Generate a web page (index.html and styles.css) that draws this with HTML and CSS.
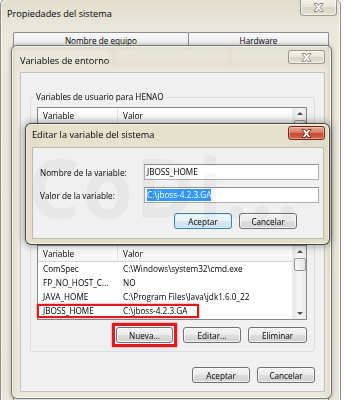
FILE: index.html
```html
<!DOCTYPE html>
<html lang="es">
<head>
    <meta charset="UTF-8">
    <meta name="viewport" content="width=device-width, initial-scale=1.0">
    <title>Variables de entorno</title>
    <link rel="stylesheet" href="styles.css">
</head>
<body>
<div class="escritorio">

    <div class="ventana ventana-sistema">
        <div class="barra">
            <span class="titulo">Propiedades del sistema</span>
            <span class="cerrar">
                <svg width="11" height="9" viewBox="0 0 11 9"><path d="M1 .5h3L5.5 2.6 7 .5h3L7.2 4.5 10 8.5H7L5.5 6.4 4 8.5H1l2.8-4z" fill="#fff" stroke="#777" stroke-width=".8"/></svg>
            </span>
        </div>
        <div class="pestanas">
            <div class="pestana p-equipo">Nombre de equipo</div>
            <div class="pestana p-hardware">Hardware</div>
        </div>
        <div class="pestanas">
            <div class="pestana p-avanzadas"></div>
            <div class="pestana p-proteccion"></div>
            <div class="pestana p-remoto"></div>
        </div>
        <div class="panel-pestana"></div>
    </div>

    <div class="ventana ventana-entorno">
        <div class="barra">
            <span class="titulo">Variables de entorno</span>
            <span class="cerrar">
                <svg width="11" height="9" viewBox="0 0 11 9"><path d="M1 .5h3L5.5 2.6 7 .5h3L7.2 4.5 10 8.5H7L5.5 6.4 4 8.5H1l2.8-4z" fill="#fff" stroke="#777" stroke-width=".8"/></svg>
            </span>
        </div>
        <div class="cliente">
            <fieldset class="grupo grupo-usuario">
                <legend>Variables de usuario para HENAO</legend>
                <div class="lista lista-usuario">
                    <div class="lista-cuerpo">
                        <div class="cabecera"><span class="c-var">Variable</span><span class="c-val">Valor</span></div>
                    </div>
                    <div class="desplazar"><span class="flecha-arriba"></span><span class="pulgar"></span><span class="hueco"></span><span class="flecha-abajo"></span></div>
                </div>
            </fieldset>

            <fieldset class="grupo grupo-sistema">
                <div class="lista lista-sistema">
                    <div class="lista-cuerpo">
                        <div class="cabecera"><span class="c-var">Variable</span><span class="c-val">Valor</span></div>
                        <div class="fila"><span class="c-var">ComSpec</span><span class="c-val">C:\Windows\system32\cmd.exe</span></div>
                        <div class="fila"><span class="c-var">FP_NO_HOST_C...</span><span class="c-val">NO</span></div>
                        <div class="fila"><span class="c-var">JAVA_HOME</span><span class="c-val">C:\Program Files\Java\jdk1.6.0_22</span></div>
                        <div class="fila"><span class="marca"><span class="c-var">JBOSS_HOME</span><span class="c-val">C:\jboss-4.2.3.GA</span></span></div>
                    </div>
                    <div class="desplazar"><span class="flecha-arriba"></span><span class="pulgar"></span><span class="hueco"></span><span class="flecha-abajo"></span></div>
                </div>
                <div class="botones">
                    <span class="marco"><button class="boton b-nueva">Nueva...</button></span>
                    <button class="boton">Editar...</button>
                    <button class="boton b-eliminar">Eliminar</button>
                </div>
            </fieldset>

            <div class="botones botones-final">
                <button class="boton">Aceptar</button>
                <button class="boton">Cancelar</button>
            </div>
        </div>
    </div>

    <div class="ventana ventana-editar">
        <div class="barra">
            <span class="titulo">Editar la variable del sistema</span>
            <span class="cerrar cerrar-activo">
                <svg width="11" height="9" viewBox="0 0 11 9"><path d="M1 .5h3L5.5 2.6 7 .5h3L7.2 4.5 10 8.5H7L5.5 6.4 4 8.5H1l2.8-4z" fill="#fff" stroke="#5a1a12" stroke-width=".8"/></svg>
            </span>
        </div>
        <div class="cliente-editar">
            <div class="campo">
                <label>Nombre de la variable:</label>
                <div class="caja">JBOSS_HOME</div>
            </div>
            <div class="campo">
                <label>Valor de la variable:</label>
                <div class="caja"><span class="seleccion">C:\jboss-4.2.3.GA</span></div>
            </div>
            <div class="botones botones-editar">
                <button class="boton predeterminado">Aceptar</button>
                <button class="boton">Cancelar</button>
            </div>
        </div>
    </div>

    <div class="marca-agua">CoDi...</div>
</div>
</body>
</html>
```

FILE: styles.css
```css
* {
    box-sizing: border-box;
}
body {
    margin: 0;
    width: 344px;
    height: 400px;
    overflow: hidden;
    background: #fff;
    font: 8.2px "Open Sans", "Liberation Sans", sans-serif;
    color: #000;
}
div.escritorio {
    position: relative;
    width: 344px;
    height: 400px;
    overflow: hidden;
}

/* ventanas */
.ventana {
    position: absolute;
}
.barra {
    display: flex;
    justify-content: space-between;
    align-items: flex-start;
}
.titulo {
    font-size: 9.2px;
    line-height: 13px;
    white-space: nowrap;
}
.cerrar {
    display: flex;
    align-items: center;
    justify-content: center;
    width: 37px;
    height: 14px;
    border: 1px solid rgba(90, 86, 70, 0.55);
    border-radius: 3px;
    background: linear-gradient(#f4f2ea, #e6e2d4 50%, #dad6c5 51%, #e4e0d1);
    box-shadow: inset 0 0 0 1px rgba(255, 255, 255, 0.6);
}
.cerrar-activo {
    border-color: #6b2a1f;
    background: linear-gradient(#e9a996, #d67d66 45%, #c24a2f 55%, #d6684c);
    box-shadow: inset 0 0 0 1px rgba(255, 210, 190, 0.5);
}

/* Propiedades del sistema */
.ventana-sistema {
    left: 0;
    top: -2px;
    width: 341px;
    height: 420px;
    border: 1px solid #8f8d84;
    border-radius: 7px 7px 0 0;
    background: linear-gradient(#e1ddcc, #ebe9de 34px, #e8e6dc);
    box-shadow: inset 0 0 0 1px rgba(255, 255, 255, 0.6);
}
.ventana-sistema .barra {
    height: 33px;
    padding-left: 6px;
}
.ventana-sistema .titulo {
    padding-top: 8px;
}
.ventana-sistema .cerrar {
    height: 17px;
    margin-right: 3px;
    border-top: 0;
    border-radius: 0 0 4px 4px;
}
.pestanas {
    display: flex;
    height: 16px;
    margin: 0 11px 0 12px;
}
.pestana {
    border: 1px solid #898c95;
    border-bottom: 0;
    border-radius: 2px 2px 0 0;
    background: linear-gradient(#f8f8f8, #e8e8e8);
    text-align: center;
    line-height: 15px;
    white-space: nowrap;
}
.pestana + .pestana {
    margin-left: -1px;
}
.p-equipo { width: 176px; }
.p-hardware { width: 141px; }
.p-avanzadas { width: 100px; background: #fcfcfc; }
.p-proteccion { width: 118px; }
.p-remoto { width: 100px; }
.panel-pestana {
    height: 360px;
    margin: 0 11px 0 12px;
    border: 1px solid #898c95;
    background: #fcfcfc;
}

/* Variables de entorno */
.ventana-entorno {
    left: 11px;
    top: 45px;
    width: 321px;
    height: 354px;
    padding: 0 6px 6px 8px;
    border: 1px solid rgba(50, 50, 44, 0.6);
    border-radius: 6px;
    background: rgba(228, 224, 204, 0.72);
    backdrop-filter: blur(2.5px);
    box-shadow: 0 0 4px rgba(0, 0, 0, 0.3), inset 0 0 0 1px rgba(255, 255, 255, 0.55);
}
.ventana-entorno .barra {
    height: 26px;
}
.ventana-entorno .titulo {
    padding-top: 8px;
}
.ventana-entorno .cerrar {
    margin-top: 4px;
}
.cliente {
    height: 320px;
    padding: 0 9px;
    border: 1px solid #c4c2b8;
    background: #f0f0f0;
}
fieldset.grupo {
    margin: 0;
    padding: 0 7px 8px 6px;
    border: 1px solid #d5dfe5;
    border-radius: 3px;
    min-width: 0;
}
fieldset.grupo legend {
    margin-left: -3px;
    padding: 0 2px;
    line-height: 12px;
}
.grupo-usuario {
    margin-top: 18px !important;
}
.grupo-sistema {
    margin-top: 14px !important;
    padding-top: 14px !important;
}

/* listas */
.lista {
    display: flex;
    border: 1px solid #828790;
    background: #fff;
}
.lista-usuario {
    margin-top: 4px;
    height: 100px;
}
.lista-sistema {
    height: 75px;
}
.lista-cuerpo {
    flex: 1;
    min-width: 0;
}
.cabecera {
    display: flex;
    height: 16px;
    line-height: 15px;
    border-bottom: 1px solid #d5d5d5;
    background: linear-gradient(#fff, #f3f4f6);
}
.cabecera .c-var {
    border-right: 1px solid #e2e3e5;
}
.c-var {
    width: 80px;
    padding-left: 5px;
    white-space: nowrap;
}
.c-val {
    padding-left: 5px;
    white-space: nowrap;
}
.fila {
    display: flex;
    height: 14px;
    line-height: 14px;
}
.marca {
    display: flex;
    width: 162px;
    height: 14px;
    margin-left: -1px;
    line-height: 10px;
    border: 2px solid #e0191e;
    box-shadow: 0 0 2px rgba(160, 0, 0, 0.6);
}
.marca .c-var {
    width: 79px;
    padding-left: 4px;
}
.desplazar {
    display: flex;
    flex-direction: column;
    align-items: center;
    width: 14px;
    background: linear-gradient(90deg, #e6e6e6, #f4f4f4 40%, #f4f4f4 60%, #e8e8e8);
    border-left: 1px solid #ececec;
}
.flecha-arriba {
    margin: 4px 0 5px;
    border-left: 3px solid transparent;
    border-right: 3px solid transparent;
    border-bottom: 3px solid #505050;
}
.pulgar {
    width: 12px;
    height: 13px;
    border: 1px solid #979797;
    border-radius: 2px;
    background: linear-gradient(90deg, #f6f6f6, #e4e4e4);
}
.hueco {
    flex: 1;
}
.flecha-abajo {
    margin: 5px 0 4px;
    border-left: 3px solid transparent;
    border-right: 3px solid transparent;
    border-top: 3px solid #505050;
}

/* botones */
.botones {
    display: flex;
    justify-content: flex-end;
    align-items: center;
    gap: 7px;
    margin-top: 7px;
}
.boton {
    width: 58px;
    height: 16px;
    padding: 0;
    font: inherit;
    color: #000;
    border: 1px solid #707070;
    border-radius: 3px;
    background: linear-gradient(#f3f3f3, #ebebeb 50%, #dddddd 50%, #d2d2d2);
    box-shadow: inset 0 0 0 1px rgba(255, 255, 255, 0.7);
}
.marco {
    display: flex;
    margin: -4px -1px -4px 0;
    padding: 1px;
    border: 3px solid #e0191e;
    box-shadow: 0 0 2px rgba(150, 0, 0, 0.6);
}
.boton.b-nueva {
    width: 57px;
}
.boton.b-eliminar {
    width: 59px;
}
.boton.predeterminado {
    border-color: #3c7fb1;
    background: linear-gradient(#f4f9fc, #e6f0f7 50%, #d6e7f2 50%, #cfe2ef);
    box-shadow: inset 0 0 0 1px rgba(210, 240, 255, 0.9);
}
.botones-final {
    margin-top: 15px;
}

/* Editar la variable */
.ventana-editar {
    left: 25px;
    top: 123px;
    width: 305px;
    height: 122px;
    padding: 0 5px 5px 6px;
    border: 1px solid rgba(30, 30, 26, 0.8);
    border-radius: 6px;
    background: rgba(224, 218, 192, 0.8);
    backdrop-filter: blur(2.5px);
    box-shadow: 0 0 8px rgba(0, 0, 0, 0.45), inset 0 0 0 1px rgba(255, 255, 255, 0.55);
}
.ventana-editar .barra {
    height: 23px;
}
.ventana-editar .titulo {
    padding-top: 4px;
}
.ventana-editar .cerrar {
    margin: 2px -1px 0 0;
}
.cliente-editar {
    height: 92px;
    padding: 16px 4px 0 7px;
    border: 1px solid #bdbbb0;
    background: #f0f0f0;
}
.campo {
    display: flex;
    align-items: center;
    height: 16px;
}
.campo + .campo {
    margin-top: 7px;
}
.campo label {
    width: 104px;
}
.caja {
    width: 175px;
    height: 16px;
    padding-left: 2px;
    line-height: 14px;
    border: 1px solid #abadb3;
    border-top-color: #8e9094;
    background: #fff;
}
.seleccion {
    display: inline-block;
    background: #3399ff;
    color: #fff;
    line-height: 12px;
}
.botones-editar {
    margin-top: 10px;
    padding-right: 22px;
}

.marca-agua {
    position: absolute;
    left: 28px;
    top: 130px;
    font: bold 82px "Open Sans", sans-serif;
    letter-spacing: 2px;
    color: rgba(0, 0, 0, 0.035);
    pointer-events: none;
    white-space: nowrap;
}
```
